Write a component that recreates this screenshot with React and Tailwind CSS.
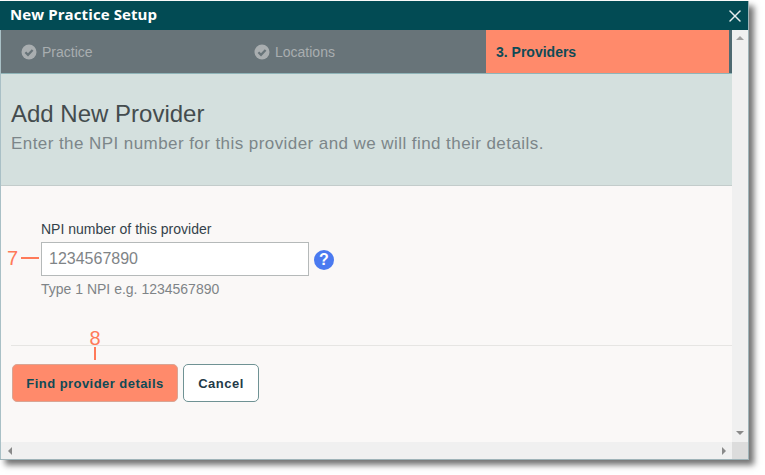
import React from 'react';
import { X } from 'lucide-react';

const DoneTab = ({ label, className }) => (
  <div className={`flex items-center gap-[5px] pt-px ${className}`}>
    <svg width="16" height="16" viewBox="0 0 16 16">
      <circle cx="8" cy="8" r="7.5" fill="#a9aeb0" />
      <path d="M4.4 8.2 L7 10.8 L11.6 5.9" fill="none" stroke="#687479" strokeWidth="2.2" />
    </svg>
    <span className="text-[14px] text-[#a9aeb0]">{label}</span>
  </div>
);

const App = () => {
  return (
    <div className="w-[765px] h-[475px] bg-white pt-px font-['Liberation_Sans',sans-serif] overflow-hidden">
      {/* Dialog window */}
      <div className="relative w-[749px] h-[459px] flex flex-col border-b border-r border-[#9fb3b8] shadow-[5px_5px_6px_rgba(0,0,0,0.55)]">
        {/* Title bar */}
        <div className="h-[29px] shrink-0 bg-[#024b54] flex items-center justify-between pl-[10px] pr-[3px]">
          <span className="font-['Open_Sans',sans-serif] font-bold text-[15px] tracking-[0.1px] pb-[2px] text-white">New Practice Setup</span>
          <X size={20} strokeWidth={1.8} className="text-[#e6eeee]" />
        </div>

        <div className="flex-1 flex min-h-0">
          <div className="w-[732px] flex flex-col border-l border-[#a9c0c6]">
            {/* Steps */}
            <div className="h-[44px] shrink-0 flex bg-[#687479] border-b border-[#8fb4b8]">
              <DoneTab label="Practice" className="w-[232px] pl-[20px]" />
              <DoneTab label="Locations" className="w-[253px] pl-[21px]" />
              <div className="w-[243px] bg-[#ff8a6b] flex items-center pl-[10px] pt-px">
                <span className="text-[14px] font-bold text-[#0f4a56]">3. Providers</span>
              </div>
              <div className="flex-1 bg-[#4f6a72]" />
            </div>

            {/* Heading */}
            <div className="h-[112px] shrink-0 bg-[#d4e0de] border-b border-[#c3cccb] pt-[26px] pl-[10px]">
              <h1 className="text-[24px] leading-[28px] text-[#444c4e]">Add New Provider</h1>
              <p className="text-[17px] leading-[20px] mt-[6px] tracking-[0.43px] text-[#7c8689]">
                Enter the NPI number for this provider and we will find their details.
              </p>
            </div>

            {/* Form */}
            <div className="relative flex-1 bg-[#faf8f7] flex flex-col pt-[35px]">
              <div className="pl-[40px]">
                <label className="block text-[14px] leading-[16px] text-[#34424a]">NPI number of this provider</label>
                <div className="flex items-center mt-[5px] gap-[4px]">
                  <div className="relative">
                    <input
                      readOnly
                      placeholder="1234567890"
                      className="w-[268px] h-[34px] bg-white border border-[#b5b9b9] px-[7px] text-[16px] text-[#7a7f82] placeholder:text-[#7f8487] outline-none"
                    />
                    {/* Callout 7 */}
                    <div className="absolute left-[-34px] top-[4px] flex items-center gap-[3px]">
                      <span className="text-[20px] leading-[24px] text-[#ff7a59]">7</span>
                      <span className="w-[18px] h-[2px] bg-[#ff7a59]" />
                    </div>
                  </div>
                  <div className="w-[20px] h-[20px] ml-[1px] mt-[2px] rounded-full bg-[#4a7af0] flex items-center justify-center">
                    <span className="text-[16px] leading-none font-bold text-white">?</span>
                  </div>
                </div>
                <p className="text-[14px] leading-[16px] mt-[5px] text-[#7f8487]">Type 1 NPI e.g. 1234567890</p>
              </div>

              <div className="relative mt-[48px] ml-[10px] border-t border-[#e6e5e3]">
                {/* Callout 8 */}
                <div className="absolute left-[74px] top-[-18px] w-[20px] flex flex-col items-center">
                  <span className="text-[20px] leading-[20px] text-[#ff7a59]">8</span>
                  <span className="w-[2px] h-[13px] mt-[-1px] bg-[#ff7a59]" />
                </div>
                <div className="flex items-center gap-[5px] mt-[18px] ml-px">
                  <button className="w-[166px] h-[38px] pt-px rounded-[5px] bg-[#ff8a6b] border border-[#d9a594] text-[13px] font-bold tracking-[0.45px] text-[#0f4a56]">
                    Find provider details
                  </button>
                  <button className="w-[76px] h-[38px] pt-px rounded-[5px] bg-white border border-[#6f9294] text-[13px] font-bold tracking-[0.5px] text-[#1f3a48]">
                    Cancel
                  </button>
                </div>
              </div>

              {/* Horizontal scrollbar */}
              <div className="mt-auto h-[17px] bg-[#f0f0f0] flex items-center pl-[7px]">
                <span className="w-0 h-0 border-y-[4px] border-y-transparent border-r-[4px] border-r-[#8a8a8a]" />
                <span className="ml-auto mr-[6px] w-0 h-0 border-y-[4px] border-y-transparent border-l-[4px] border-l-[#8a8a8a]" />
              </div>
            </div>
          </div>

          {/* Vertical scrollbar */}
          <div className="flex-1 bg-[#f0f0f0] flex flex-col items-center">
            <span className="mt-[6px] w-0 h-0 border-x-[4px] border-x-transparent border-b-[4px] border-b-[#a0a0a0]" />
            <span className="mt-auto mb-[7px] w-0 h-0 border-x-[4px] border-x-transparent border-t-[4px] border-t-[#8a8a8a]" />
            <span className="w-full h-[17px] bg-[#dcdcdc]" />
          </div>
        </div>
      </div>
    </div>
  );
};

export default App;
